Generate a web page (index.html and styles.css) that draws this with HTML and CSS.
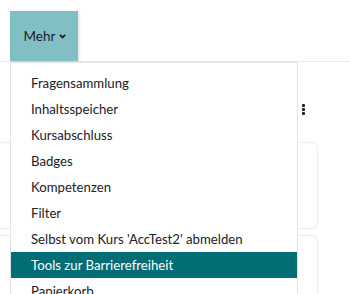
FILE: index.html
```html
<!DOCTYPE html>
<html lang="de">
<head>
    <meta charset="UTF-8">
    <title>Kurs - Mehr</title>
    <link rel="stylesheet" href="styles.css">
</head>
<body>

    <div class="secondary-nav">
        <button class="more-btn">Mehr
            <svg class="chev" width="7" height="5" viewBox="0 0 7 5"><path d="M0.9 0.9 L3.5 3.5 L6.1 0.9" fill="none" stroke="#1d2125" stroke-width="1.9"/></svg>
        </button>
    </div>

    <div class="page">
        <div class="page-header">
            <span class="kebab"><i></i><i></i><i></i></span>
        </div>
        <div class="card card-first"></div>
        <div class="card"></div>
    </div>

    <!-- dropdown lies over the page -->
    <div class="dropdown-menu">
        <a class="dropdown-item" href="#">Fragensammlung</a>
        <a class="dropdown-item" href="#">Inhaltsspeicher</a>
        <a class="dropdown-item" href="#">Kursabschluss</a>
        <a class="dropdown-item" href="#">Badges</a>
        <a class="dropdown-item" href="#">Kompetenzen</a>
        <a class="dropdown-item" href="#">Filter</a>
        <a class="dropdown-item" href="#">Selbst vom Kurs 'AccTest2' abmelden</a>
        <a class="dropdown-item active" href="#">Tools zur Barrierefreiheit</a>
        <a class="dropdown-item" href="#">Papierkorb</a>
    </div>

</body>
</html>
```

FILE: styles.css
```css
body {
    margin: 0;
    font-family: Lato, "Noto Sans", sans-serif;
    font-size: 13.2px;
    color: #1d2125;
    background: #fff;
    overflow: hidden;
}

.secondary-nav {
    height: 62px;
    border-bottom: 1px solid #e9eaeb;
    box-sizing: border-box;
    padding: 11px 0 0 10px;
}

.more-btn {
    height: 50px;
    width: 68px;
    border: 0;
    background: #81bfc5;
    box-shadow: 1px 1px 3px rgba(0, 0, 0, 0.15);
    font-family: inherit;
    font-size: 13.5px;
    color: #1d2125;
    padding: 0 0 0 2px;
    display: flex;
    align-items: center;
    justify-content: center;
    gap: 4px;
}

.more-btn .chev {
    margin-top: 1px;
}

.page {
    margin-left: -20px;
    width: 338px;
}

.page-header {
    height: 80px;
    display: flex;
    justify-content: flex-end;
    padding-right: 13px;
}

.kebab {
    margin-top: 42px;
    display: flex;
    flex-direction: column;
    gap: 1px;
}

.kebab i {
    width: 3px;
    height: 3px;
    background: #1d2125;
    border-radius: 1px;
}

.card {
    height: 85px;
    border: 1px solid #ececec;
    border-radius: 6px;
    margin-bottom: 6px;
}

.dropdown-menu {
    position: absolute;
    top: 62px;
    left: 10px;
    width: 288px;
    box-sizing: border-box;
    padding: 7px 0;
    background: #fff;
    border: 1px solid #e2e3e4;
}

.dropdown-item {
    display: block;
    height: 26px;
    line-height: 26px;
    padding-left: 20px;
    color: #1d2125;
    text-decoration: none;
    white-space: nowrap;
}

.dropdown-item.active {
    background: #016d74;
    color: #fff;
}
```
